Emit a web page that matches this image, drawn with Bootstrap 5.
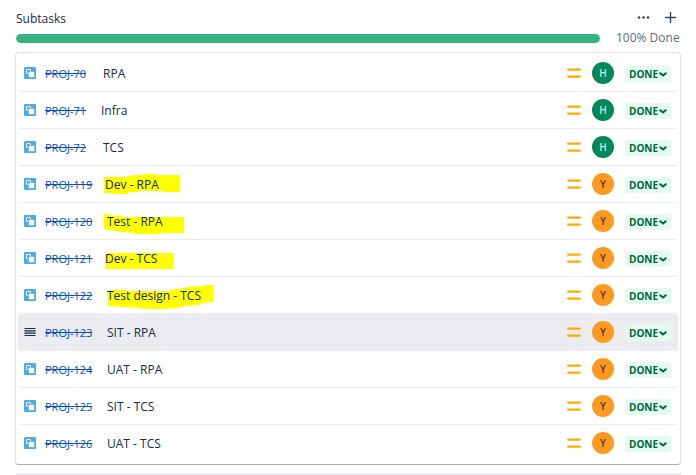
<!DOCTYPE html>
<html lang="en">
<head>
<meta charset="utf-8">
<meta name="viewport" content="width=device-width, initial-scale=1">
<title>Subtasks</title>
<link href="https://cdn.jsdelivr.net/npm/bootstrap@5.3.0/dist/css/bootstrap.min.css" rel="stylesheet">
<style>
  body { font-family: "Open Sans", "Noto Sans", sans-serif; font-size: 12px; line-height: 16px; color: #172b4d; background: #fff; }
  .panel-page { padding: 10px 15px 0 16px; }
  .panel-head { margin-bottom: 3px; }
  .panel-title { font-size: 12px; line-height: 16px; font-weight: 500; padding-top: 1px; }
  .panel-tools { gap: 11px; padding-right: 3px; }
  .tool-btn { width: 16px; height: 16px; color: #344563; }
  .done-track { height: 9px; border-radius: 5px; background: #dfe1e6; }
  .done-track .progress-bar { background: #36b37e; border-radius: 5px; }
  .done-label { color: #5e6c84; width: 65px; }
  .issue-box { margin: 6px 0 0 -1px; padding: 2px; border: 1px solid #dfe1e6; border-bottom-color: #a5adba; border-radius: 4px; }
  .issue-row { height: 37px; padding: 0 7px 0 6px; border: 0; border-bottom: 1px solid #ebecf0; background: transparent; color: inherit; border-radius: 3px; }
  .issue-row:last-child { border-bottom-color: transparent; }
  .issue-row.is-hovered { background: #ebecf0; }
  .issue-key { font-size: 11px; margin-left: 9px; padding-top: 2px; color: #0052cc; text-decoration: line-through; }
  .issue-name { position: relative; padding-top: 2px; }
  .issue-name span { position: relative; }
  .marker { position: absolute; left: -4px; top: -9px; fill: #ffff00; }
  .avatar { width: 22px; height: 22px; font-size: 10px; font-weight: 600; margin: 0 11px; }
  .avatar-h { background: #00875a; color: #c8e6da; }
  .avatar-y { background: #ff991f; color: #4a3a2a; }
  .status-btn { width: 46px; height: 16px; padding: 0 4px; margin-top: 2px; border-radius: 3px; background: #e3fcef; color: #006644; font-size: 10px; line-height: 16px; font-weight: 700; }
  .next-section { height: 2px; margin: 8px 0 0; border: 0; background: #ebecf0; opacity: 1; }
</style>
</head>
<body>
<svg class="d-none" aria-hidden="true">
  <symbol id="i-subtask" viewBox="0 0 12 12"><rect width="12" height="12" rx="1" fill="#4bade8"/><rect x="2.5" y="2.5" width="4" height="4" rx=".5" fill="none" stroke="#fff"/><rect x="4.5" y="4.5" width="6" height="6" rx="1.2" fill="#fff" stroke="#4bade8" stroke-width=".6"/></symbol>
  <symbol id="i-grip" viewBox="0 0 12 12"><path d="M.5 4h11v4h-11z" fill="#7a869a"/><path d="M.5 2.5h11M.5 9.5h11" stroke="#172b4d"/><path d="M.5 4.5h11M.5 7.5h11" stroke="#42526e"/></symbol>
  <symbol id="i-medium" viewBox="0 0 14 12"><path d="M1.2 2.6h11.6M1.2 9.6h11.6" stroke="#ffab00" stroke-width="2.3" stroke-linecap="round"/></symbol>
  <symbol id="i-chevron" viewBox="0 0 8 8"><path d="M1.3 3.2l2.7 2.4 2.7-2.4" fill="none" stroke="#006644" stroke-width="2" stroke-linecap="round" stroke-linejoin="round"/></symbol>
</svg>
<main class="panel-page">
  <header class="panel-head d-flex justify-content-between align-items-start">
    <h1 class="panel-title mb-0">Subtasks</h1>
    <div class="panel-tools d-flex">
      <button type="button" class="tool-btn btn p-0 border-0 d-flex" aria-label="More actions"><svg width="16" height="16" viewBox="0 0 16 16" fill="currentColor"><circle cx="4" cy="7.5" r="1.3"/><circle cx="8.5" cy="7.5" r="1.3"/><circle cx="13" cy="7.5" r="1.3"/></svg></button>
      <button type="button" class="tool-btn btn p-0 border-0 d-flex" aria-label="Create subtask"><svg width="16" height="16" viewBox="0 0 16 16"><path d="M8.5 2v11M3 7.5h11" stroke="currentColor" stroke-width="1.4"/></svg></button>
    </div>
  </header>
  <div class="d-flex align-items-center gap-3">
    <div class="progress done-track flex-grow-1" role="progressbar" aria-label="Subtasks done" aria-valuenow="100" aria-valuemin="0" aria-valuemax="100"><div class="progress-bar w-100"></div></div>
    <span class="done-label text-nowrap">100% Done</span>
  </div>
  <ul class="issue-box list-group" id="issues"></ul>
  <hr class="next-section">
</main>
<script src="https://cdn.jsdelivr.net/npm/bootstrap@5.3.0/dist/js/bootstrap.bundle.min.js"></script>
<script>
  // number, name, assignee, key column width, highlighter stroke
  const issues = [
    [70, "RPA", "H", 58],
    [71, "Infra", "H", 56],
    [72, "TCS", "H", 58],
    [119, "Dev - RPA", "Y", 60, "3,11 24,11 32,9 42,9 42,8 54,8 54,9 79,9 79,26 63,26 63,25 37,25 37,26 27,26 27,28 11,28 11,27 3,27"],
    [120, "Test - RPA", "Y", 62, "1,11 7,11 7,12 16,13 27,15 27,14 81,14 81,30 56,30 56,31 31,31 31,30 20,29 14,28 5,27 1,26"],
    [121, "Dev - TCS", "Y", 60, "4,13 72,13 72,29 4,29"],
    [122, "Test design - TCS", "Y", 62, "5,13 24,13 24,14 66,14 72,12 82,11 84,10 99,9 104,8 110,8 110,25 99,26 96,28 82,29 76,31 62,32 38,32 38,31 5,29"],
    [123, "SIT - RPA", "Y", 62],
    [124, "UAT - RPA", "Y", 62],
    [125, "SIT - TCS", "Y", 62],
    [126, "UAT - TCS", "Y", 62]
  ];
  document.getElementById("issues").innerHTML = issues.map(([n, name, who, keyWidth, stroke]) => `
    <li class="issue-row list-group-item d-flex align-items-center ${n === 123 ? "is-hovered" : ""}">
      <svg width="12" height="12" aria-hidden="true"><use href="#${n === 123 ? "i-grip" : "i-subtask"}"/></svg>
      <a class="issue-key" style="width:${keyWidth}px" href="#PROJ-${n}">PROJ-${n}</a>
      <span class="issue-name me-auto">${stroke ? `<svg class="marker" width="120" height="36" aria-hidden="true"><polygon points="${stroke}"/></svg>` : ""}<span>${name}</span></span>
      <svg width="14" height="12" role="img" aria-label="Medium priority"><use href="#i-medium"/></svg>
      <span class="avatar avatar-${who.toLowerCase()} rounded-circle d-flex align-items-center justify-content-center">${who}</span>
      <button type="button" class="status-btn btn border-0 d-flex align-items-center justify-content-between">DONE<svg width="8" height="8" aria-hidden="true"><use href="#i-chevron"/></svg></button>
    </li>`).join("");
</script>
</body>
</html>
